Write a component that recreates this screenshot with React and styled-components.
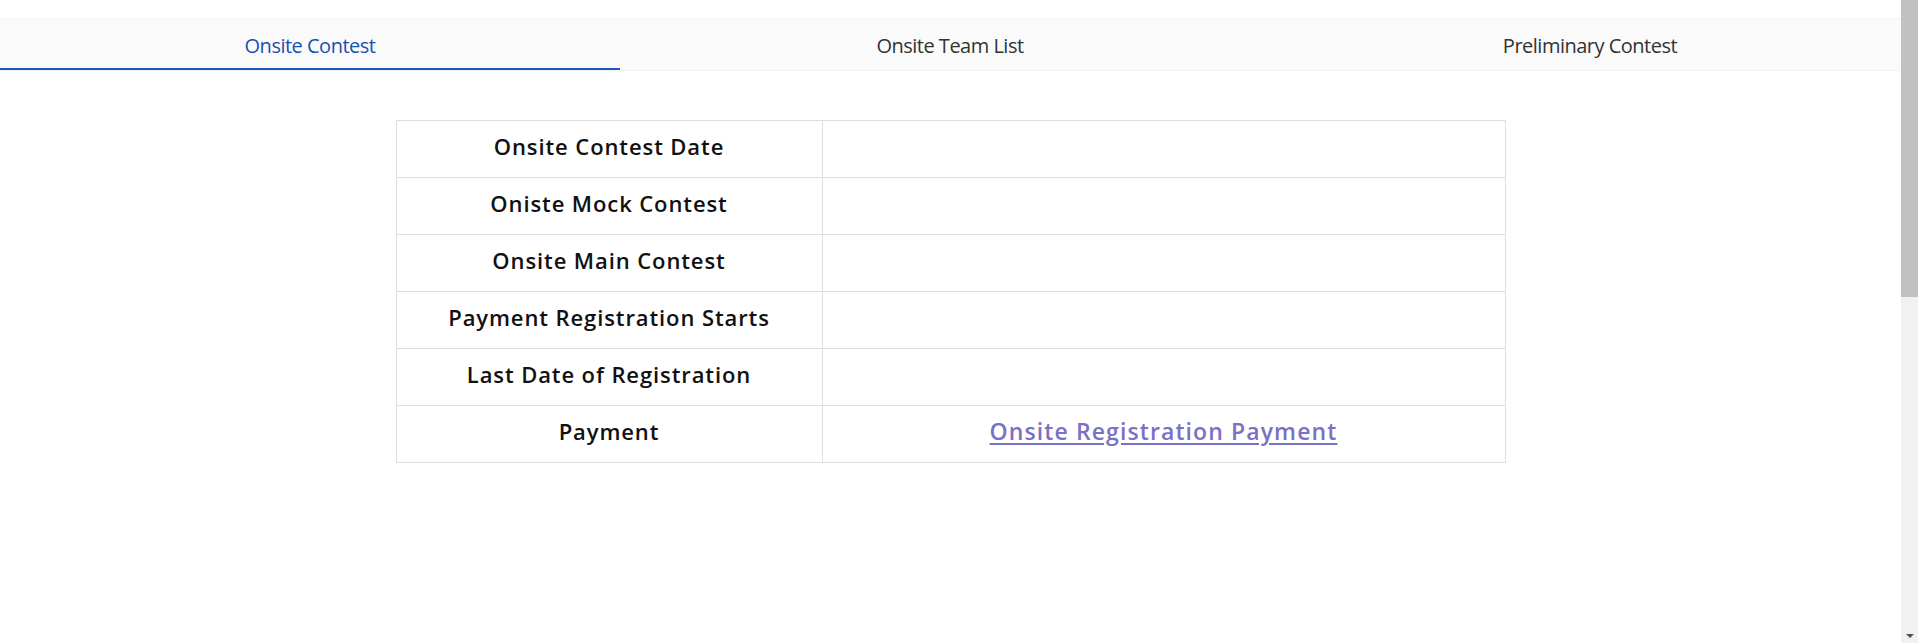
import React, { useState } from 'react';
import styled, { createGlobalStyle } from 'styled-components';

const GlobalStyle = createGlobalStyle`
  body {
    margin: 0;
    background: #fff;
    font-family: "Open Sans", "Noto Sans", sans-serif;
    overflow: hidden;
  }
`;

const Shell = styled.div`
  display: flex;
  height: 100vh;
`;

const Main = styled.main`
  flex: 1;
  min-width: 0;
  padding-top: 18px;
`;

// mock of the browser's vertical scrollbar seen in the screenshot
const ScrollTrack = styled.div`
  width: 17px;
  flex-shrink: 0;
  background: #f1f1f1;
  display: flex;
  flex-direction: column;
  justify-content: space-between;
  align-items: center;
`;

const ScrollThumb = styled.div`
  width: 100%;
  height: 297px;
  background: #c1c1c1;
`;

const ScrollArrow = styled.div`
  width: 0;
  height: 0;
  margin-bottom: 5px;
  border-left: 4px solid transparent;
  border-right: 4px solid transparent;
  border-top: 4px solid #505050;
`;

const TabBar = styled.nav`
  display: grid;
  grid-template-columns: repeat(3, 620px);
  column-gap: 20px;
  background: #fafafa;
  border-top: 1px solid #f3f3f3;
  border-bottom: 1px solid #f3f3f3;
`;

const Tab = styled.button`
  height: 51px;
  border: 0;
  border-bottom: 2px solid ${(p) => (p.active ? '#1a56c0' : 'transparent')};
  background: transparent;
  font-family: "Open Sans", "Noto Sans", sans-serif;
  font-size: 20px;
  letter-spacing: -0.5px;
  color: ${(p) => (p.active ? '#1a4fb5' : '#333')};
  cursor: pointer;
  padding: 3px 0 0;
`;

const Container = styled.div`
  max-width: 1110px;
  margin: 49px auto 0;
`;

const Table = styled.table`
  width: 100%;
  border-collapse: collapse;
  font-family: "Open Sans", "Noto Sans", sans-serif;
`;

const Row = styled.tr`
  height: 57px;
`;

const Cell = styled.td`
  border: 1px solid #dedede;
  text-align: center;
  vertical-align: middle;
  padding: 0 12px 7px;
  font-size: 22px;
  font-weight: 600;
  letter-spacing: 0.9px;
  color: #111;
  width: ${(p) => p.w || 'auto'};
`;

const Link = styled.a`
  color: #7a70c8;
  font-size: 23px;
  font-weight: 600;
  letter-spacing: 1.1px;
  text-decoration: underline;
  text-underline-offset: 3px;
`;

const rows = [
  'Onsite Contest Date',
  'Oniste Mock Contest',
  'Onsite Main Contest',
  'Payment Registration Starts',
  'Last Date of Registration',
];

export default function App() {
  const [tab, setTab] = useState(0);
  const tabs = ['Onsite Contest', 'Onsite Team List', 'Preliminary Contest'];

  return (
    <Shell>
      <GlobalStyle />
      <Main>
        <TabBar>
          {tabs.map((t, i) => (
            <Tab key={t} active={i === tab} onClick={() => setTab(i)}>
              {t}
            </Tab>
          ))}
        </TabBar>
        <Container>
          <Table>
            <tbody>
              {rows.map((r) => (
                <Row key={r}>
                  <Cell w="401px">{r}</Cell>
                  <Cell />
                </Row>
              ))}
              <Row>
                <Cell w="401px">Payment</Cell>
                <Cell>
                  <Link href="#">Onsite Registration Payment</Link>
                </Cell>
              </Row>
            </tbody>
          </Table>
        </Container>
      </Main>
      <ScrollTrack>
        <ScrollThumb />
        <ScrollArrow />
      </ScrollTrack>
    </Shell>
  );
}
